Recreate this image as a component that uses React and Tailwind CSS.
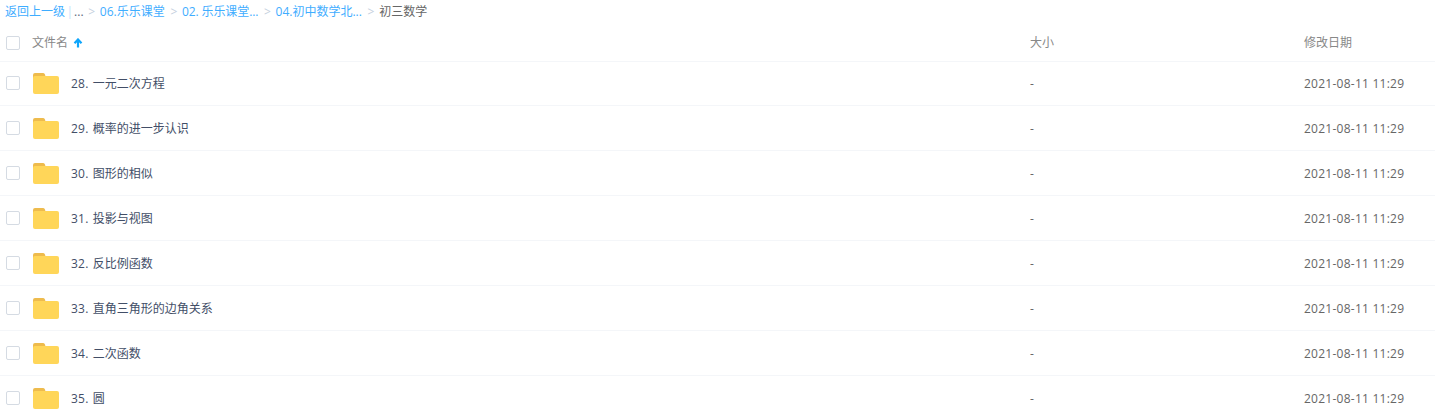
import React from "react";

const rows = [
  ["28.", "一元二次方程"],
  ["29.", "概率的进一步认识"],
  ["30.", "图形的相似"],
  ["31.", "投影与视图"],
  ["32.", "反比例函数"],
  ["33.", "直角三角形的边角关系"],
  ["34.", "二次函数"],
  ["35.", "圆"],
];

const font = { fontFamily: '"Open Sans", "Noto Sans CJK SC", sans-serif' };

function Check() {
  return <span className="block w-[14px] h-[14px] border border-[#d5dbe3] rounded-[2px] bg-white" />;
}

function Folder() {
  return (
    <svg width="26" height="21" viewBox="0 0 26 21" className="block">
      <path d="M0 5 V2 a2 2 0 0 1 2-2 h8 a2 2 0 0 1 2 1.5 l.5 2 V5z" fill="#eebb4d" />
      <rect x="0" y="3" width="26" height="18" rx="2" fill="#ffd659" />
    </svg>
  );
}

function Sep() {
  return <span className="text-[#c5d0de] mx-[4.7px]">&gt;</span>;
}

export default function App() {
  return (
    <div style={font} className="w-[1435px] h-[410px] overflow-hidden bg-white text-[12px] text-[#424e67]">
      <div className="h-[24px] pl-[5px] flex items-center text-[12px] text-[#3fadff] whitespace-nowrap">
        <span>返回上一级</span>
        <span className="text-[#c5e3fb] ml-[1.5px] mr-[1px]">|</span>
        <span className="text-[#5a6a80]">...</span>
        <Sep />
        <span className="mr-[1px]">06.乐乐课堂</span>
        <Sep />
        <span className="tracking-[-0.1px] mr-[1px]">02. 乐乐课堂...</span>
        <Sep />
        <span className="mr-[1px]">04.初中数学北...</span>
        <Sep />
        <span className="text-[#666]">初三数学</span>
      </div>
      <div className="h-[38px] flex items-center border-b border-[#f4f6f9] text-[#888]">
        <div className="w-[32px] pl-[6px]"><Check /></div>
        <div className="w-[998px] flex items-center gap-[5px]">
          文件名
          <svg width="10" height="10" viewBox="0 0 10 10" className="block">
            <path d="M5 9.5 V2 M1.5 5.2 L5 1.5 L8.5 5.2" fill="none" stroke="#0ea5fb" strokeWidth="2.2" />
          </svg>
        </div>
        <div className="w-[274px]">大小</div>
        <div>修改日期</div>
      </div>
      {rows.map(([num, name], i) => (
        <div key={num} className={`${i === 0 ? "h-[44px] pb-[1px]" : "h-[45px]"} flex items-center border-b border-[#f4f6f9]`}>
          <div className="w-[33px] pl-[6px]"><Check /></div>
          <div className="w-[38px]"><Folder /></div>
          <div className="w-[959px] leading-[20px] pt-[2px]">
            <span className="tracking-[0.25px] mr-[4px]">{num}</span>
            {name}
          </div>
          <div className="w-[274px] text-[#666] leading-[20px] pt-[2px]">-</div>
          <div className="text-[#666] tracking-[0.25px] leading-[20px] pt-[2px]">2021-08-11 11:29</div>
        </div>
      ))}
    </div>
  );
}
